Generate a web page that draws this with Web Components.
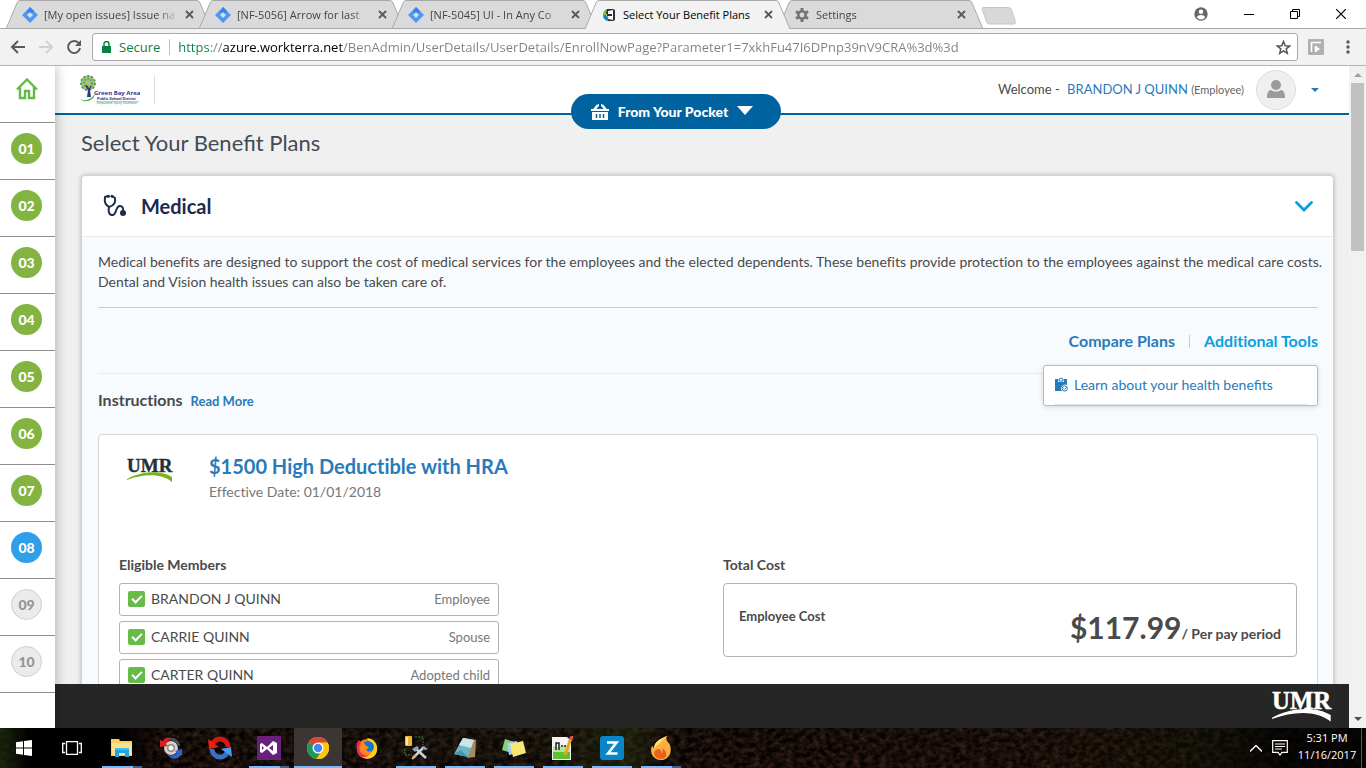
<!DOCTYPE html>
<html lang="en">
<head>
<meta charset="utf-8">
<title>Select Your Benefit Plans</title>
<style>
  html, body {
    height: 100%;
  }
  body {
    margin: 0;
    display: flex;
    flex-direction: column;
    overflow: hidden;
    background: #fff;
    color: #4a4a4a;
    font-family: Lato, "Liberation Sans", sans-serif;
    font-size: 14px;
    line-height: 20px;
    font-variant-ligatures: none;
    --ui-font: "Open Sans", "Noto Sans", sans-serif;
    --link: #2a7ab9;
    --blue: #0063a0;
    --cyan: #0a9fdc;
  }
</style>
</head>
<body>
  <tab-strip>
    <browser-tab icon="jira">[My open issues] Issue na</browser-tab>
    <browser-tab icon="jira">[NF-5056] Arrow for last</browser-tab>
    <browser-tab icon="jira">[NF-5045] UI - In Any Co</browser-tab>
    <browser-tab icon="globe" active>Select Your Benefit Plans</browser-tab>
    <browser-tab icon="gear">Settings</browser-tab>
  </tab-strip>
  <address-bar url="https://azure.workterra.net/BenAdmin/UserDetails/UserDetails/EnrollNowPage?Parameter1=7xkhFu47I6DPnp39nV9CRA%3d%3d"></address-bar>
  <app-shell>
    <step-nav slot="nav" current="8" total="10"></step-nav>
    <app-header slot="header" user="BRANDON J QUINN" role-name="Employee"></app-header>
    <benefit-section heading="Medical">
      <span slot="intro">Medical benefits are designed to support the cost of medical services for the employees and the elected dependents. These benefits provide protection to the employees against the medical care costs. Dental and Vision health issues can also be taken care of.</span>
      <plan-card name="$1500 High Deductible with HRA" date="01/01/2018">
        <member-row slot="member" relation="Employee">BRANDON J QUINN</member-row>
        <member-row slot="member" relation="Spouse">CARRIE QUINN</member-row>
        <member-row slot="member" relation="Adopted child">CARTER QUINN</member-row>
        <cost-box slot="cost" label="Employee Cost" amount="$117.99" period="/ Per pay period"></cost-box>
      </plan-card>
    </benefit-section>
  </app-shell>
  <task-bar></task-bar>

<script>
const icons = {
  jira: `<svg width="16" height="16" viewBox="0 0 16 16"><path d="M8 0l8 8-8 8-8-8z" fill="#4c97f8"/><path d="M8 0l4 4-4 4-3-3z" fill="#3384f0"/><path d="M8 5l3 3-3 3-3-3z" fill="#dcdcdc"/></svg>`,
  globe: `<svg width="14" height="14" viewBox="0 0 14 14"><path d="M5 1a6 6 0 0 0-4 6h3l2-2z" fill="#8ab94a"/><path d="M1 7a6 6 0 0 0 5 6V9L4 7z" fill="#1b87b8"/><path d="M5 1h6l2 1v10l-2 1H6v-2l5 1V2L6 3v3H4z" fill="#21303c"/><path d="M6 5h5v4H6z" fill="#fff"/><path d="M5 6h5v2H5z" fill="#21303c"/></svg>`,
  gear: `<svg width="14" height="14" viewBox="0 0 14 14"><g fill="#757575"><path d="M5.500 0h3v14h-3z"/><path d="M5.500 0h3v14h-3z" transform="rotate(60 7 7)"/><path d="M5.500 0h3v14h-3z" transform="rotate(120 7 7)"/><circle cx="7" cy="7" r="5"/></g><circle cx="7" cy="7" r="2.400" fill="#dadada"/></svg>`,
  close: `<svg width="9" height="9" viewBox="0 0 9 9"><path d="M1 1l7 7M8 1L1 8" stroke="#5a5a5a" stroke-width="1.800"/></svg>`,
  back: `<svg width="16" height="14" viewBox="0 0 16 14"><path d="M15 7H2M8 1L2 7l6 6" fill="none" stroke="#5a5a5a" stroke-width="2"/></svg>`,
  forward: `<svg width="16" height="14" viewBox="0 0 16 14"><path d="M1 7h13M8 1l6 6-6 6" fill="none" stroke="#d0d0d0" stroke-width="2"/></svg>`,
  reload: `<svg width="16" height="16" viewBox="0 0 16 16"><path d="M13 4.500A6 6 0 1 0 14 9" fill="none" stroke="#5a5a5a" stroke-width="2"/><path d="M15 1v6H9z" fill="#5a5a5a"/></svg>`,
  lock: `<svg width="9" height="12" viewBox="0 0 9 12"><path d="M0 5h9v7H0z" fill="#0b8043"/><path d="M2 6V3a2.500 2.500 0 0 1 5 0v3" fill="none" stroke="#0b8043" stroke-width="1.500"/></svg>`,
  star: `<svg width="15" height="15" viewBox="0 0 15 15"><path d="M7.500 1.500l1.700 4.200 4.500.3-3.500 2.900 1.100 4.400-3.800-2.400-3.800 2.400 1.100-4.400L1.300 6l4.500-.3z" fill="none" stroke="#555" stroke-width="1.500"/></svg>`,
  ext: `<svg width="16" height="16" viewBox="0 0 16 16"><rect width="16" height="16" rx="1" fill="#b0b0b0"/><path d="M3.500 13V3.500H13M7.500 13V7" fill="none" stroke="#fff" stroke-width="1.500"/><path d="M8 7l4 3-4 3z" fill="#fff"/></svg>`,
  dots: `<svg width="4" height="14" viewBox="0 0 4 14"><g fill="#5a5a5a"><circle cx="2" cy="2" r="1.700"/><circle cx="2" cy="7" r="1.700"/><circle cx="2" cy="12" r="1.700"/></g></svg>`,
  account: `<svg width="14" height="14" viewBox="0 0 14 14"><circle cx="7" cy="7" r="6.700" fill="#666"/><circle cx="7" cy="4.700" r="2.200" fill="#fff"/><path d="M2.800 10.200c1-3 7.400-3 8.400 0a5 5 0 0 1-8.400 0z" fill="#fff"/></svg>`,
  minimize: `<svg width="10" height="10" viewBox="0 0 10 10"><path d="M0 5.500h10" stroke="#000"/></svg>`,
  restore: `<svg width="10" height="10" viewBox="0 0 10 10"><path d="M.500 2.500h7v7h-7zM2.500 2V.500h7v7H8" fill="none" stroke="#000"/></svg>`,
  exit: `<svg width="10" height="10" viewBox="0 0 10 10"><path d="M0 0l10 10M10 0L0 10" stroke="#000" stroke-width="1.200"/></svg>`,
  home: `<svg width="22" height="22" viewBox="0 0 22 22"><path d="M1 11.500L11 1.500l10 10M4 9v11h5v-7h4v7h5V9" fill="none" stroke="#62bb46" stroke-width="2.400"/></svg>`,
  basket: `<svg width="18" height="16" viewBox="0 0 18 16"><path d="M0 5h18v2H0zM1 8h16v8H1z" fill="#fff"/><path d="M3 6l4-5M15 6l-4-5" stroke="#fff" stroke-width="2.500"/><path d="M7 0h1v2H7zM10 0h1v2h-1z" fill="#fff"/><path d="M5.500 10v4M9 10v4M12.500 10v4" stroke="#0063a0" stroke-width="1.500"/></svg>`,
  person: `<svg width="18" height="18" viewBox="0 0 18 18"><g fill="#9b9b9b"><circle cx="9" cy="5" r="5"/><path d="M0 18c0-6 2-8 4-8 3 2 7 2 10 0 2 0 4 2 4 8z"/></g></svg>`,
  stethoscope: `<svg width="24" height="24" viewBox="0 0 24 24"><path d="M5 2L2 3c-1 6 1 8 4 10 4-1 7-4 6-9l-3-2M6 13c-1 4 0 8 3 8 5 1 3-9 8-9 2 0 4 2 3 6" fill="none" stroke="#1b2a4e" stroke-width="2" stroke-linecap="round" stroke-linejoin="round"/><circle cx="20" cy="19" r="3" fill="#1b2a4e"/><circle cx="5.500" cy="2.200" r="1.500" fill="#1b2a4e"/><circle cx="9" cy="2.200" r="1.500" fill="#1b2a4e"/></svg>`,
  chevron: `<svg width="18" height="11" viewBox="0 0 18 11"><path d="M1.500 1.500L9 9l7.500-7.500" fill="none" stroke="#0a9fdc" stroke-width="2.800" stroke-linecap="round"/></svg>`,
  clipboard: `<svg width="13" height="15" viewBox="0 0 13 15"><path d="M0 2h3v3h6V2h3v6a4 4 0 0 0-5 6H0z" fill="#2a7ab9"/><path d="M4 4V2h1a1 1 0 0 1 2 0h1v2z" fill="none" stroke="#2a7ab9" stroke-width="1"/><circle cx="9.800" cy="11.500" r="2.600" fill="none" stroke="#2a7ab9"/><path d="M8.500 11.500l1 1 2-2" fill="none" stroke="#2a7ab9"/></svg>`,
  start: `<svg width="16" height="16" viewBox="0 0 16 16"><path d="M0 2.200l7-1v6.300H0zM8 1l8-1v7.500H8zM0 8.500h7v6.300l-7-1zM8 8.500h8V16l-8-1z" fill="#fff"/></svg>`,
  taskview: `<svg width="20" height="14" viewBox="0 0 20 14"><path d="M4.500.700h11v12.600h-11zM3 2.500H.700v9H3M17 2.500h2.300v9H17" fill="none" stroke="#fff" stroke-width="1.300"/></svg>`,
  explorer: `<svg width="22" height="18" viewBox="0 0 22 18"><path d="M0 0h8l1 2h12v15H0z" fill="#f5cf68"/><path d="M1 4h20v12H1z" fill="#fde08a"/><path d="M4 18V9h14v9h-4v-4H8v4z" fill="#1fa5e4"/><path d="M4 9h14v2H4z" fill="#36c2f2"/></svg>`,
  sync1: `<svg width="22" height="22" viewBox="0 0 22 22"><circle cx="11" cy="11" r="7" fill="#d4d0c4"/><circle cx="11" cy="11" r="4" fill="#8d8a80"/><circle cx="11" cy="11" r="2.500" fill="#f5f5f5"/><path d="M19 9A9 9 0 0 0 9 2" fill="none" stroke="#4b4d55" stroke-width="3"/><path d="M0 3v7l8-1-2-2 4-5C8-1 5 1 3 4z" fill="#d81e1e"/><path d="M22 19v-7l-7 2 2 2c-3 3-7 3-10 1 4 6 10 6 14 1z" fill="#2f64cf"/></svg>`,
  sync2: `<svg width="24" height="24" viewBox="0 0 24 24"><path d="M4 11A8 8 0 0 1 20 11" fill="none" stroke="#d91616" stroke-width="5"/><path d="M0 3l1 10 10-2z" fill="#f02010"/><path d="M20 13A8 8 0 0 1 4 13" fill="none" stroke="#3970c5" stroke-width="5"/><path d="M24 21l-1-10-10 2z" fill="#4a9bf0"/></svg>`,
  vs: `<svg width="24" height="24" viewBox="0 0 24 24"><rect width="24" height="24" fill="#68217a"/><path d="M3 8l2-1 5 4 6-6 4 2v10l-4 2-6-6-5 4-2-1zM5 10v4l2-2zM16 9l-4 3 4 3z" fill="#fff" fill-rule="evenodd"/></svg>`,
  chrome: `<svg width="22" height="22" viewBox="0 0 22 22"><circle cx="11" cy="11" r="11" fill="#fbc516"/><path d="M11 11L1.500 5.500a11 11 0 0 1 19 0z" fill="#dc4437"/><path d="M1.500 5.500a11 11 0 0 0 8 16.400L15 13z" fill="#1b9a59"/><path d="M11 5.500h9.500A11 11 0 0 1 9.500 22L15 14z" fill="#fbc516"/><circle cx="11" cy="11" r="5.500" fill="#fff"/><circle cx="11" cy="11" r="4.200" fill="#4688f1"/></svg>`,
  firefox: `<svg width="22" height="22" viewBox="0 0 22 22"><circle cx="11" cy="12" r="10" fill="#ff7a18"/><path d="M11 1c9 1 11 8 10 13-2 8-10 9-14 6 9 0 11-8 4-19z" fill="#ffd020"/><path d="M1 6l2-3 2 2c-4 7-1 13 7 14-8 4-13-4-11-13z" fill="#ee2a52"/><circle cx="12" cy="10" r="6" fill="#1674cf"/><path d="M5 6c3-1 4 1 5 3l3 1-3 3c2 2 4 2 6 0-1 5-8 6-11 1z" fill="#ff8b1c"/></svg>`,
  tools: `<svg width="24" height="24" viewBox="0 0 24 24"><rect x="1" width="7" height="10" rx="1" fill="#efb32e"/><path d="M2 1h2v8H2z" fill="#ffe9a8"/><path d="M11 1h8v8M1 13v6h7" fill="none" stroke="#37843a" stroke-dasharray="2 1"/><path d="M9 22L20 11M11 12l11 10" stroke="#c9d1dc" stroke-width="2.500"/><path d="M8 13l5-3 2 2-4 4zM18 13l2-3 4 3-3 1z" fill="#8fa1b8"/><path d="M8 23l4-4" stroke="#e0b45c" stroke-width="2"/></svg>`,
  notebook: `<svg width="22" height="20" viewBox="0 0 22 20"><path d="M10 0l12 2-1 17-8 1z" fill="#a98a60"/><path d="M9 0l11 2-6 17L0 16z" fill="#6fb3c4"/><path d="M9 0l11 2-3 8L5 7z" fill="#c8e5ea"/><path d="M0 16l7-4 7 7z" fill="#4697ab"/></svg>`,
  notes: `<svg width="24" height="18" viewBox="0 0 24 18"><path d="M3 0l10 3-3 11-10-3z" fill="#84cf83"/><path d="M5 4l10-2 2 12-10 2z" fill="#a6cdf2"/><path d="M8 5l13-3 3 12-13 4z" fill="#f8e574"/></svg>`,
  notepad: `<svg width="22" height="24" viewBox="0 0 22 24"><path d="M0 1h15l4 4v19H0z" fill="#f4f4f4"/><path d="M1 13h17v10H1z" fill="#5cc22e"/><path d="M1 10c6 3 10-2 17 0v6H1z" fill="#b6e596"/><path d="M4 14V7h3v7M9 10h2M12 10h2" fill="none" stroke="#222" stroke-width="1.500"/><path d="M19 2l-6 17" stroke="#e9a52b" stroke-width="3"/><path d="M20 0l-1 4" stroke="#d55" stroke-width="3"/></svg>`,
  zed: `<svg width="24" height="24" viewBox="0 0 24 24"><rect width="24" height="24" rx="3" fill="#0a86c8"/><path d="M7 6.500h9.500L8 17.500h9.500" fill="none" stroke="#fff" stroke-width="2.600"/></svg>`,
  flame: `<svg width="20" height="24" viewBox="0 0 20 24"><path d="M16 0c-2 4 1 6 3 9 3 9-3 15-9 15C2 24-2 16 1 10l2 2C4 5 9 3 16 0z" fill="#fcb040"/><path d="M16 0C9 3 4 5 3 12l5-4z" fill="#ffdf7a"/><path d="M10 23c-8 0-9-9-3-10 2 0 4 2 3 4 2 0 2-3 1-5 6 3 6 11-1 11z" fill="#e8621c"/></svg>`,
  up: `<svg width="12" height="7" viewBox="0 0 12 7"><path d="M0 6.500l6-6 6 6" fill="none" stroke="#fff" stroke-width="1.400"/></svg>`,
  message: `<svg width="16" height="16" viewBox="0 0 16 16"><path d="M.700.700h14.600v11.600H10L8 15l-2-2.700H.700zM3 4h10M3 6.500h10M3 9h7" fill="none" stroke="#fff" stroke-width="1.200"/></svg>`
};

class UmrLogo extends HTMLElement {
  connectedCallback() {
    this.attachShadow({ mode: "open" }).innerHTML = `
    <style>
      :host { display: block; width: 46px; color: #262f3b; --swoosh: #7ab41d; }
      :host([light]) { width: 60px; color: #fff; --swoosh: #fff; }
      svg { display: block; width: 100%; overflow: visible; }
      text { font: bold 19px "Liberation Serif", serif; fill: currentColor; stroke: currentColor; stroke-width: .4px; }
      path { fill: var(--swoosh); }
    </style>
    <svg viewBox="0 0 46 26"><text x="0" y="15">UMR</text><path d="M0 22c14-8 34-9 45-2v5c-9-8-27-9-45-2z"/></svg>`;
  }
}

class BrowserTab extends HTMLElement {
  connectedCallback() {
    const active = this.hasAttribute("active");
    this.attachShadow({ mode: "open" }).innerHTML = `
    <style>
      :host {
        display: flex;
        position: relative;
        flex: 0 1 205px;
        box-sizing: border-box;
        min-width: 0;
        align-items: center;
        gap: 6px;
        padding: 0 17px 0 16px;
        margin-right: -12px;
        height: 29px;
        font: 11px/29px var(--ui-font);
        color: #444;
      }
      :host([active]) { z-index: 2; color: #000; }
      .shape { position: absolute; inset: 0; width: 100%; height: 100%; }
      .icon { position: relative; display: flex; flex: 0 0 16px; justify-content: center; }
      .title {
        position: relative;
        flex: 1;
        overflow: hidden;
        white-space: nowrap;
        ${active ? "" : "-webkit-mask-image: linear-gradient(to right, #000 calc(100% - 22px), transparent);"}
      }
      button { position: relative; display: flex; border: 0; padding: 0; background: none; }
    </style>
    <svg class="shape" viewBox="0 0 205 29" preserveAspectRatio="none">
      <path d="M0 29L11 3q1-2.500 3-2.500h177q2 0 3 2.500l11 26" fill="${active ? "#f2f2f2" : "#dadada"}" stroke="#a9a9a9"/>
      ${active ? "" : `<path d="M0 28.500h205" stroke="#a9a9a9"/>`}
    </svg>
    <span class="icon">${icons[this.getAttribute("icon")]}</span>
    <span class="title"><slot></slot></span>
    <button aria-label="Close tab">${icons.close}</button>`;
  }
}

class TabStrip extends HTMLElement {
  connectedCallback() {
    this.attachShadow({ mode: "open" }).innerHTML = `
    <style>
      :host {
        display: flex;
        flex: none;
        height: 29px;
        padding-left: 6px;
        background: linear-gradient(#a9a9a9, #a9a9a9) bottom / 100% 1px no-repeat #fff;
      }
      button { display: flex; border: 0; padding: 0; background: none; align-items: center; justify-content: center; }
      .add { margin: 7px 0 0 10px; align-self: flex-start; }
      .window { display: flex; margin-left: auto; height: 27px; padding-right: 2px; }
      .window button { width: 46px; }
      .window .user { width: 50px; }
    </style>
    <slot></slot>
    <button class="add" aria-label="New tab"><svg width="35" height="18"><path d="M1.500.500h26q2 0 3 2l4 13q0 1.500-2 1.500h-24q-2 0-3-2l-4-12q-.500-2 0-2.500z" fill="#d8d8d8" stroke="#c4c4c4"/></svg></button>
    <div class="window">
      <button class="user" aria-label="Account">${icons.account}</button>
      <button aria-label="Minimize">${icons.minimize}</button>
      <button aria-label="Restore">${icons.restore}</button>
      <button aria-label="Close">${icons.exit}</button>
    </div>`;
  }
}

class AddressBar extends HTMLElement {
  connectedCallback() {
    this.attachShadow({ mode: "open" }).innerHTML = `
    <style>
      :host {
        display: flex;
        flex: none;
        align-items: center;
        box-sizing: border-box;
        height: 37px;
        padding: 0 16px 0 10px;
        background: #f2f2f2;
        border-bottom: 1px solid #b4b4b4;
        font: 13px/26px var(--ui-font);
      }
      button { display: flex; border: 0; padding: 0; background: none; justify-content: center; align-items: center; }
      .nav { display: flex; gap: 12px; margin-right: 10px; }
      .nav button { width: 16px; }
      .box {
        flex: 1;
        display: flex;
        align-items: center;
        box-sizing: border-box;
        height: 28px;
        padding: 0 6px 0 9px;
        border: 1px solid #a9a9a9;
        border-radius: 3px;
        background: #fff;
      }
      .box span { padding: 0 10px 0 8px; margin-right: 8px; color: #0b8043; background: linear-gradient(#c0c0c0, #c0c0c0) right / 1px 16px no-repeat; }
      input {
        flex: 1;
        min-width: 0;
        border: 0;
        padding: 0;
        outline: 0;
        height: 26px;
        font: inherit;
        color: #808080;
        background: linear-gradient(to right, #0b8043 32px, #808080 32px 45px, #000 45px 165px, #808080 165px);
        -webkit-background-clip: text;
        -webkit-text-fill-color: transparent;
      }
      .end { display: flex; margin-left: 10px; gap: 22px; }
    </style>
    <div class="nav">
      <button aria-label="Back">${icons.back}</button>
      <button aria-label="Forward">${icons.forward}</button>
      <button aria-label="Reload">${icons.reload}</button>
    </div>
    <div class="box">
      ${icons.lock}<span>Secure</span>
      <input aria-label="Address" value="${this.getAttribute("url")}">
      <button aria-label="Bookmark">${icons.star}</button>
    </div>
    <div class="end">
      <button aria-label="Extension">${icons.ext}</button>
      <button aria-label="Menu">${icons.dots}</button>
    </div>`;
  }
}

class StepNav extends HTMLElement {
  connectedCallback() {
    const current = Number(this.getAttribute("current"));
    let steps = "";
    for (let i = 1; i <= Number(this.getAttribute("total")); i++) {
      const state = i < current ? "done" : i === current ? "current" : "todo";
      steps += `<li><a href="#" class="${state}">${String(i).padStart(2, "0")}</a></li>`;
    }
    this.attachShadow({ mode: "open" }).innerHTML = `
    <style>
      :host {
        display: block;
        position: relative;
        z-index: 3;
        width: 55px;
        background: #fff;
        box-shadow: 0 0 12px rgba(0, 0, 0, .3);
        clip-path: inset(0 -20px 0 0);
      }
      ul { list-style: none; margin: 0; padding: 0; }
      li { box-sizing: border-box; height: 57px; padding: 10px 11px; border-bottom: 1px solid #8e8e8e; }
      a {
        display: block;
        box-sizing: border-box;
        width: 31px;
        height: 31px;
        border-radius: 50%;
        color: #fff;
        font-weight: 900;
        font-size: 14px;
        line-height: 31px;
        text-align: center;
        text-decoration: none;
      }
      .home { border-radius: 0; padding: 2px 5px; }
      .done { background: #83b441; }
      .current { background: #2e9fe8; }
      .todo { background: #ebebeb; border: 1px solid #cfcfcf; color: #949494; line-height: 29px; }
    </style>
    <ul><li><a class="home" href="#" aria-label="Home">${icons.home}</a></li>${steps}</ul>`;
  }
}

class AppHeader extends HTMLElement {
  connectedCallback() {
    this.attachShadow({ mode: "open" }).innerHTML = `
    <style>
      :host {
        display: flex;
        position: relative;
        z-index: 2;
        flex: none;
        align-items: center;
        box-sizing: border-box;
        height: 49px;
        padding: 0 30px 0 24px;
        background: #fff;
        border-bottom: 2px solid var(--blue);
      }
      .brand { padding-right: 14px; height: 29px; margin-top: -1px; border-right: 1px solid #ddd; }
      .brand svg { display: block; }
      .name { font: bold 6px "Open Sans", sans-serif; fill: #33368f; }
      .sub { font: bold 4px Roboto, sans-serif; fill: #33368f; }
      .motto { font: italic 3px Roboto, sans-serif; fill: #2f9a72; }
      .user { margin: 0 12px 0 auto; font-size: 13px; }
      a { color: var(--link); text-decoration: none; margin-left: 4px; }
      small { font-size: 11px; color: #666; }
      .avatar {
        display: flex;
        align-items: center;
        justify-content: center;
        box-sizing: border-box;
        width: 40px;
        height: 40px;
        padding-bottom: 2px;
        border: 1px solid #ddd;
        border-radius: 50%;
        background: #efefef;
      }
      .menu { border: 0; background: none; padding: 0; margin-left: 15px; display: flex; }
      .pocket {
        position: absolute;
        top: 28px;
        left: calc(50% - 131px);
        display: flex;
        align-items: center;
        justify-content: center;
        width: 210px;
        height: 35px;
        padding: 0 8px 0 0;
        border: 0;
        border-radius: 18px;
        background: var(--blue);
        color: #fff;
        font: 900 14px/20px Lato, sans-serif;
        gap: 9px;
      }
    </style>
    <div class="brand">
      <svg width="61" height="31" viewBox="0 0 61 31" role="img" aria-label="Green Bay Area Public School District">
        <circle cx="9" cy="8" r="7.500" fill="#a9c46b"/>
        <circle cx="9" cy="8" r="7" fill="none" stroke="#4f9a6a" stroke-width="2" stroke-dasharray="2 2"/>
        <circle cx="9" cy="8" r="4" fill="none" stroke="#3d7fae" stroke-width="2" stroke-dasharray="1 2"/>
        <path d="M8 10l2 3 3-3-2 5 1 7H8l1-7-3-4z" fill="#33368f"/>
        <path d="M1 24c6 3 11 0 15-5-1 6-9 10-15 5z" fill="#51ae4a"/>
        <text class="name" x="15" y="20">Green Bay Area</text>
        <text class="sub" x="18" y="25">Public School District</text>
        <path d="M17 26.500h43" stroke="#7cc6dd" stroke-width=".700"/>
        <text class="motto" x="18" y="29">Empowered. Equity. Excellence</text>
      </svg>
    </div>
    <div class="user">Welcome - <a href="#">${this.getAttribute("user")}</a> <small>(${this.getAttribute("role-name")})</small></div>
    <div class="avatar">${icons.person}</div>
    <button class="menu" aria-label="User menu"><svg width="8" height="4"><path d="M0 0h8L4 4z" fill="#2a7ab9"/></svg></button>
    <button class="pocket">${icons.basket}<span>From Your Pocket</span><svg width="16" height="12"><path d="M0 0h16L8 9z" fill="#fff"/></svg></button>`;
  }
}

class AppShell extends HTMLElement {
  connectedCallback() {
    this.attachShadow({ mode: "open" }).innerHTML = `
    <style>
      :host { display: grid; flex: 1; min-height: 0; grid-template-columns: auto 1fr 17px; }
      .page { display: flex; flex-direction: column; min-width: 0; min-height: 0; background: #f0f0f0; }
      main { flex: 1; min-height: 0; overflow: hidden; padding: 16px 15px 0 26px; }
      h1 { margin: 0 0 20px; font-size: 22px; line-height: 24px; font-weight: 400; color: #434a54; font-variant-ligatures: normal; }
      footer { display: flex; flex: none; align-items: center; justify-content: flex-end; height: 44px; padding-right: 17px; background: #262626; }
      .scroll { display: flex; flex-direction: column; align-items: center; background: #f1f1f1; padding: 7px 0; }
      .thumb { width: 13px; height: 168px; margin: 6px 0 auto; background: #c1c1c1; }
    </style>
    <slot name="nav"></slot>
    <div class="page">
      <slot name="header"></slot>
      <main><h1>Select Your Benefit Plans</h1><slot></slot></main>
      <footer><umr-logo light></umr-logo></footer>
    </div>
    <div class="scroll">
      <svg width="8" height="4"><path d="M0 4h8L4 0z" fill="#a0a0a0"/></svg>
      <div class="thumb"></div>
      <svg width="8" height="4"><path d="M0 0h8L4 4z" fill="#505050"/></svg>
    </div>`;
  }
}

class BenefitSection extends HTMLElement {
  connectedCallback() {
    this.attachShadow({ mode: "open" }).innerHTML = `
    <style>
      :host {
        display: block;
        border: 1px solid #d2d2d2;
        border-radius: 4px;
        background: #f7fbfe;
        box-shadow: 0 0 4px rgba(0, 0, 0, .25);
      }
      header {
        display: flex;
        align-items: center;
        gap: 14px;
        box-sizing: border-box;
        height: 61px;
        padding: 0 20px 0 21px;
        border-bottom: 1px solid #e8ecef;
        border-radius: 4px 4px 0 0;
        background: #fff;
      }
      h2 { flex: 1; margin: 0; font-size: 20px; line-height: 24px; color: #1b2a4e; }
      button { display: flex; border: 0; padding: 0; background: none; }
      .body { padding: 15px 15px 0 16px; }
      p { margin: 0; padding-bottom: 15px; border-bottom: 1px solid #ccc; }
      /* the intro may run a little into the card's side padding */
      .intro { display: block; margin-right: -12px; }
      a { color: var(--link); text-decoration: none; }
      .links {
        display: flex;
        position: relative;
        align-items: center;
        justify-content: flex-end;
        gap: 13px;
        padding: 23px 0 22px;
        border-bottom: 1px solid #e8ecef;
        font-size: 16px;
        font-weight: 700;
      }
      .links i { width: 1px; height: 13px; background: #ccc; margin: 0 1px; }
      .links .tools { color: var(--cyan); }
      .popover {
        position: absolute;
        top: 57px;
        right: 0;
        display: flex;
        align-items: center;
        gap: 6px;
        box-sizing: border-box;
        width: 275px;
        height: 41px;
        padding: 0 0 2px 11px;
        border: 1px solid #bbb;
        border-radius: 3px;
        background: linear-gradient(#e6e6e6, #e6e6e6) 10px 100% / 253px 1px no-repeat #fff;
        box-shadow: 0 1px 5px rgba(0, 0, 0, .15);
        font-size: 14px;
        font-weight: 400;
        font-variant-ligatures: normal;
      }
      .instructions { display: flex; align-items: baseline; gap: 8px; margin: 16px 0 23px; }
      h3 { margin: 0; font-size: 16px; line-height: 20px; }
      .instructions a { font-size: 13px; font-weight: 700; }
    </style>
    <header>${icons.stethoscope}<h2>${this.getAttribute("heading")}</h2><button aria-label="Collapse">${icons.chevron}</button></header>
    <div class="body">
      <p><span class="intro"><slot name="intro"></slot></span></p>
      <div class="links">
        <a href="#">Compare Plans</a><i></i><a class="tools" href="#">Additional Tools</a>
        <a class="popover" href="#">${icons.clipboard}<span>Learn about your health benefits</span></a>
      </div>
      <div class="instructions"><h3>Instructions</h3><a href="#">Read More</a></div>
      <slot></slot>
    </div>`;
  }
}

class PlanCard extends HTMLElement {
  connectedCallback() {
    this.attachShadow({ mode: "open" }).innerHTML = `
    <style>
      :host { display: block; padding: 20px 20px 40px; border: 1px solid #d5d8da; border-radius: 4px; background: #fff; }
      .top { display: flex; gap: 36px; padding-left: 8px; margin-bottom: 53px; }
      umr-logo { margin-top: 2px; }
      h3 { margin: 0; font-size: 20px; line-height: 22px; color: var(--link); }
      p { margin: 5px 0 0; color: #777; }
      .columns { display: grid; grid-template-columns: 1fr 1fr; gap: 30px; }
      h4 { margin: 0 0 8px; font-size: 14px; line-height: 20px; }
      .members { display: flex; flex-direction: column; gap: 5px; max-width: 380px; }
    </style>
    <div class="top">
      <umr-logo></umr-logo>
      <div><h3>${this.getAttribute("name")}</h3><p>Effective Date: ${this.getAttribute("date")}</p></div>
    </div>
    <div class="columns">
      <section><h4>Eligible Members</h4><div class="members"><slot name="member"></slot></div></section>
      <section><h4>Total Cost</h4><slot name="cost"></slot></section>
    </div>`;
  }
}

class MemberRow extends HTMLElement {
  connectedCallback() {
    this.attachShadow({ mode: "open" }).innerHTML = `
    <style>
      :host { display: block; box-sizing: border-box; height: 33px; padding: 0 8px; border: 1px solid #aeb4b8; border-radius: 3px; }
      label { display: flex; align-items: center; height: 29px; gap: 6px; }
      input {
        appearance: none;
        flex: none;
        box-sizing: border-box;
        width: 17px;
        height: 16px;
        margin: 1px 0 0;
        border-radius: 2px;
        background: #66bc46;
      }
      input:checked::before {
        content: "";
        display: block;
        box-sizing: border-box;
        width: 10px;
        height: 6px;
        margin: 4px 0 0 4px;
        border: solid #fff;
        border-width: 0 0 2px 2px;
        transform: rotate(-45deg);
      }
      .relation { margin-left: auto; font-size: 13px; color: #777; }
    </style>
    <label><input type="checkbox" checked><slot></slot><span class="relation">${this.getAttribute("relation")}</span></label>`;
  }
}

class CostBox extends HTMLElement {
  connectedCallback() {
    this.attachShadow({ mode: "open" }).innerHTML = `
    <style>
      :host {
        display: flex;
        justify-content: space-between;
        box-sizing: border-box;
        height: 74px;
        padding: 22px 15px 0;
        border: 1px solid #aeb4b8;
        border-radius: 4px;
        font-weight: 700;
      }
      .label { font-size: 13px; }
      .amount { font-size: 30px; line-height: 42px; }
    </style>
    <span class="label">${this.getAttribute("label")}</span>
    <span><span class="amount">${this.getAttribute("amount")}</span>${this.getAttribute("period")}</span>`;
  }
}

class TaskBar extends HTMLElement {
  connectedCallback() {
    const apps = [
      ["explorer", "more"], ["sync1", ""], ["sync2", ""], ["vs", "more"], ["chrome", "open focus"], ["firefox", ""],
      ["tools", "open"], ["notebook", "open"], ["notes", "open"], ["notepad", "open"], ["zed", "open"], ["flame", "more"]
    ];
    this.attachShadow({ mode: "open" }).innerHTML = `
    <style>
      :host { display: flex; position: relative; flex: none; height: 40px; background: #0c0806; color: #fff; font: 11px/17px var(--ui-font); }
      .photo { position: absolute; inset: 0; width: 100%; height: 100%; }
      button {
        display: flex;
        position: relative;
        align-items: center;
        justify-content: center;
        flex: none;
        width: 48px;
        padding: 0;
        border: 0;
        background: no-repeat 4px 100% / 40px 2px;
      }
      .apps { display: flex; gap: 1px; margin-left: 2px; }
      .open { background-image: linear-gradient(#76b9ff, #76b9ff); }
      .more { background-image: linear-gradient(to right, #76b9ff 31px, #41648d 31px); }
      .focus { background-color: #3b3634; background-size: 48px 2px; background-position: 0 100%; }
      .tray { display: flex; position: relative; margin-left: auto; align-items: center; }
      .tray button { width: 24px; height: 40px; }
      time { width: 68px; padding: 1px 0 5px; text-align: center; border-right: 1px solid #555; margin: 0 4px 0 1px; }
    </style>
    <svg class="photo" aria-hidden="true">
      <filter id="leaves" x="0" y="0" width="100%" height="100%" color-interpolation-filters="sRGB">
        <feTurbulence type="fractalNoise" baseFrequency=".15 .2" numOctaves="4" seed="4"/>
        <feColorMatrix values=".45 0 0 0 -.14  .3 0 0 0 -.1  .26 0 0 0 -.09  0 0 0 0 1"/>
      </filter>
      <linearGradient id="tint">
        <stop offset="0" stop-color="#1c2d0b" stop-opacity=".7"/><stop offset=".02" stop-color="#000" stop-opacity=".95"/>
        <stop offset=".09" stop-color="#000" stop-opacity=".95"/><stop offset=".12" stop-color="#150b08" stop-opacity=".2"/>
        <stop offset=".4" stop-color="#1c210c" stop-opacity=".3"/><stop offset=".46" stop-color="#27300f" stop-opacity=".6"/>
        <stop offset=".5" stop-color="#150b08" stop-opacity=".2"/><stop offset=".78" stop-color="#241609" stop-opacity=".3"/>
        <stop offset=".87" stop-color="#121506" stop-opacity=".5"/><stop offset=".94" stop-color="#030302" stop-opacity=".8"/>
      </linearGradient>
      <rect width="100%" height="100%" filter="url(#leaves)"/>
      <rect width="100%" height="100%" fill="url(#tint)"/>
    </svg>
    <button aria-label="Start">${icons.start}</button>
    <button aria-label="Task view">${icons.taskview}</button>
    <div class="apps">${apps.map(([name, state]) => `<button class="${state}" aria-label="${name}">${icons[name]}</button>`).join("")}</div>
    <div class="tray">
      <button aria-label="Hidden icons">${icons.up}</button>
      <button aria-label="Notifications">${icons.message}</button>
      <time>5:31 PM<br>11/16/2017</time>
    </div>`;
  }
}

customElements.define("umr-logo", UmrLogo);
customElements.define("browser-tab", BrowserTab);
customElements.define("tab-strip", TabStrip);
customElements.define("address-bar", AddressBar);
customElements.define("step-nav", StepNav);
customElements.define("app-header", AppHeader);
customElements.define("app-shell", AppShell);
customElements.define("benefit-section", BenefitSection);
customElements.define("plan-card", PlanCard);
customElements.define("member-row", MemberRow);
customElements.define("cost-box", CostBox);
customElements.define("task-bar", TaskBar);
</script>
</body>
</html>
